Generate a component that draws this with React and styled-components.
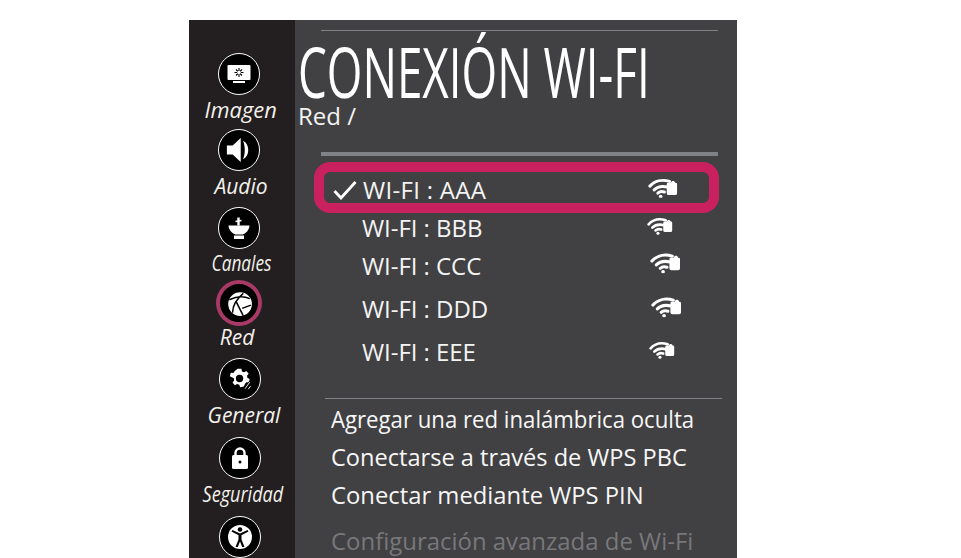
import React from "react";
import styled, { createGlobalStyle } from "styled-components";

const Global = createGlobalStyle`
    html, body { margin: 0; padding: 0; background: #fff; height: 558px; overflow: hidden; }
    body { font-family: "Open Sans", "Liberation Sans", sans-serif; }
`;

const Page = styled.div`
    padding: 20px 0 0 189px;
    height: 538px;
    overflow: hidden;
`;

const Panel = styled.div`
    display: flex;
    width: 548px;
    height: 538px;
    overflow: hidden;
    background: #414042;
    color: #fff;
`;

const Sidebar = styled.nav`
    width: 106px;
    flex: none;
    padding: 33px 6px 0 0;
    background: #231f20;
    box-sizing: border-box;
`;

const NavItem = styled.div`
    display: flex;
    flex-direction: column;
    align-items: center;
    height: ${(p) => p.$h}px;
`;

const NavIcon = styled.div`
    width: 42px;
    height: 42px;
    flex: none;
    box-sizing: border-box;
    border-radius: 50%;
    background: #000;
    border: ${(p) => (p.$active ? "2px solid #a93a68" : "1.5px solid #fff")};
    box-shadow: ${(p) => (p.$active ? "0 0 0 2px #a93a68" : "none")};
    display: flex;
    align-items: center;
    justify-content: center;
    transform: translateX(${(p) => p.$dx}px);
`;

const NavLabel = styled.div`
    font-style: italic;
    font-size: 21px;
    line-height: 28px;
    margin-top: ${(p) => p.$top}px;
    white-space: nowrap;
    color: #f4f1ec;
    transform: translateX(${(p) => p.$dx}px) scaleX(${(p) => p.$sx});
`;

const Main = styled.main`
    flex: 1;
    min-width: 0;
    padding: 10px 0 0 5px;
`;

const Rule = styled.div`
    height: ${(p) => p.$h}px;
    background: #808285;
    margin-left: ${(p) => p.$left}px;
    margin-top: ${(p) => p.$top || 0}px;
    width: ${(p) => p.$w}px;
`;

const Title = styled.h1`
    margin: 0 0 0 -2px;
    height: 66px;
    padding-top: 7px;
    font-size: 70px;
    line-height: 66px;
    font-weight: 400;
    white-space: nowrap;
    transform: scaleX(0.654);
    transform-origin: left center;
`;

const Crumb = styled.div`
    font-size: 24px;
    line-height: 30px;
    margin: -3px 0 0 -2px;
    color: #f4f4f4;
    height: 51px;
`;

const NetworkList = styled.div`
    margin: 6px 0 0 19px;
`;

const NetworkRow = styled.div`
    display: flex;
    align-items: center;
    box-sizing: border-box;
    height: ${(p) => p.$h}px;
    width: 405px;
    padding-left: 43px;
    position: relative;
    font-size: 24px;
    letter-spacing: -0.05px;
    white-space: nowrap;
    color: #f4f4f4;
`;

const SelectedRow = styled(NetworkRow)`
    height: 51px;
    margin-left: -5px;
    width: 405px;
    padding: 4px 0 0 39px;
    letter-spacing: 0.3px;
    border: 10px solid #c92160;
    border-radius: 16px;
`;

const Check = styled.svg`
    width: 24px;
    height: 20px;
    margin-left: -30px;
    margin-right: 6px;
    flex: none;
`;

const SignalIcon = styled.svg`
    position: absolute;
    top: calc(50% + ${(p) => p.$dy}px);
    left: ${(p) => p.$x}px;
    width: ${(p) => p.$w}px;
    transform: translateY(-50%);
`;

const Options = styled.div`
    margin: 0 0 0 31px;
    padding-top: 1px;
`;

const Option = styled.div`
    font-size: 24.5px;
    line-height: ${(p) => p.$h}px;
    height: ${(p) => p.$h}px;
    white-space: nowrap;
    transform: scaleX(${(p) => p.$sx});
    transform-origin: left center;
    color: ${(p) => (p.$disabled ? "#77787b" : "#f7f7f7")};
`;

const Glyph = ({ children, size = 26 }) => (
    <svg width={size} height={size} viewBox="0 0 26 26">
        {children}
    </svg>
);

const PictureIcon = () => (
    <Glyph>
        <rect x="1.500" y="4" width="23" height="15" rx="1" fill="#fff" />
        <rect x="7" y="20" width="12" height="2" fill="#fff" />
        <g stroke="#000" strokeWidth="1.1">
            <path d="M13 7v9M8.5 11.5h9M10 8.5l6 6M16 8.5l-6 6" />
        </g>
        <circle cx="13" cy="11.5" r="1.8" fill="#fff" />
    </Glyph>
);

const AudioIcon = () => (
    <Glyph size={30}>
        <path d="M2.500 9h5l7-6.500v21l-7-6.500h-5z" fill="#fff" />
        <path d="M16.500 5c3 1.500 4.500 4.500 4.500 8s-1.500 6.500-4.500 8c1-2.500 1.500-5 1.500-8s-.5-5.500-1.500-8z" fill="#fff" />
    </Glyph>
);

const ChannelIcon = () => (
    <Glyph>
        <path d="M12.500 2.500v8" stroke="#fff" strokeWidth="2.400" />
        <path d="M9.500 6.500l6-1" stroke="#fff" strokeWidth="1.600" />
        <path d="M2.500 10.500h21c0 4-3.500 8-7 9h-7c-3.500-1-7-5-7-9z" fill="#fff" />
        <rect x="8" y="20.500" width="10" height="3.500" fill="#fff" />
    </Glyph>
);

const NetworkIcon = () => (
    <Glyph size={28}>
        <circle cx="14" cy="14" r="11" fill="#fff" />
        <path d="M4 10c6-3 13-4 19-1M7 22c0-7 4-13 10-18M10 11l7 14M16 18l8-3" fill="none" stroke="#000" strokeWidth="1.400" />
    </Glyph>
);

const GearIcon = () => (
    <Glyph size={24}>
        <path
            fill="#fff"
            fillRule="evenodd"
            d="M10.500 2h4l.7 2.800 2.200 1 2.500-1.500 2.500 3-1.800 2.200.5 2.500 2.400 1-1 3.800-2.800-.2-1.500 2-1 2.600-4 .8-1-2.800-2.300-.8-2.500 1.500-2.500-3 1.800-2.200-.4-2.500L2 10l1-3.800 2.800.2 1.500-2zM12.500 8.500a4 4 0 1 0 0 8 4 4 0 0 0 0-8z"
        />
        <path d="M18 24l6-8M22 25l3-5" stroke="#000" strokeWidth="2.500" />
        <path d="M18.500 23.500l5-7M22 24l2.500-3.500" stroke="#fff" strokeWidth="1" />
    </Glyph>
);

const LockIcon = () => (
    <Glyph>
        <path d="M8.500 11V8a4.500 4.500 0 0 1 9 0v3" fill="none" stroke="#fff" strokeWidth="2.400" />
        <rect x="5" y="10" width="16" height="14" rx="1.500" fill="#fff" />
        <circle cx="13" cy="17" r="1.500" fill="#000" />
    </Glyph>
);

const AccessIcon = () => (
    <Glyph>
        <circle cx="13" cy="13" r="12" fill="#fff" />
        <circle cx="13" cy="5.500" r="2.300" fill="#000" />
        <path d="M4.500 7.500l7 3.800v4.200L8.500 23h2.300l2.200-5.500 2.200 5.500h2.300l-3-7.500v-4.200l7-3.800-.9-1.500L13 9.500 5.400 6z" fill="#000" />
    </Glyph>
);

const WifiIcon = ({ x, w, dy = -1 }) => (
    <SignalIcon $x={x} $w={w} $dy={dy} viewBox="0 0 32 22">
        <g fill="none" stroke="#fff" strokeWidth="3.200" strokeLinecap="round">
            <path d="M2 9C7 3.500 15 1.500 23 4" />
            <path d="M6.500 13C10 9.500 15 8.500 21 10" />
            <path d="M10.500 16.500c2-1.800 4.500-2 7-1.200" />
        </g>
        <circle cx="13.500" cy="20" r="1.900" fill="#fff" />
        <path d="M20 7a1.500 1.500 0 0 1 1.500-1.500h3c.5-2.500 4-2.500 4.500 0h.5a1.500 1.500 0 0 1 1.500 1.500v9.500a2 2 0 0 1-2 2h-7a2 2 0 0 1-2-2z" fill="#fff" />
    </SignalIcon>
);

const NAV = [
    { label: "Imagen", Icon: PictureIcon, h: 76, dx: 0, labelDx: 2, sx: 1.04, top: 1 },
    { label: "Audio", Icon: AudioIcon, h: 78, dx: 0, labelDx: 2, sx: 1, top: 1 },
    { label: "Canales", Icon: ChannelIcon, h: 75, dx: 0, labelDx: 3, sx: 0.82, top: 0 },
    { label: "Red", Icon: NetworkIcon, h: 76, dx: 0, labelDx: -2, sx: 1, top: -1, active: true },
    { label: "General", Icon: GearIcon, h: 79, dx: 1, labelDx: 5, sx: 1, top: 1 },
    { label: "Seguridad", Icon: LockIcon, h: 79, dx: 1, labelDx: 4, sx: 0.86, top: 1 },
    { label: "", Icon: AccessIcon, h: 60, dx: 1, labelDx: 0, sx: 1, top: 1 },
];

const NETWORKS = [
    { name: "WI-FI : BBB", h: 28, x: 328, w: 26 },
    { name: "WI-FI : CCC", h: 48, x: 331, w: 31, dy: -2 },
    { name: "WI-FI : DDD", h: 38, x: 332, w: 31 },
    { name: "WI-FI : EEE", h: 48, x: 330, w: 26 },
];

const OPTIONS = [
    { text: "Agregar una red inalámbrica oculta", h: 38, sx: 0.905 },
    { text: "Conectarse a través de WPS PBC", h: 38, sx: 0.963 },
    { text: "Conectar mediante WPS PIN", h: 38, sx: 0.972 },
    { text: "Configuración avanzada de Wi-Fi", h: 54, sx: 0.977, disabled: true },
];

export default function App() {
    return (
        <Page>
            <Global />
            <Panel>
                <Sidebar>
                    {NAV.map(({ label, Icon, h, dx, labelDx, sx, top, active }) => (
                        <NavItem key={label || "access"} $h={h}>
                            <NavIcon $active={active} $dx={dx}>
                                <Icon />
                            </NavIcon>
                            {label && (
                                <NavLabel $dx={labelDx} $sx={sx} $top={top}>
                                    {label}
                                </NavLabel>
                            )}
                        </NavItem>
                    ))}
                </Sidebar>
                <Main>
                    <Rule $h={1} $left={21} $w={397} />
                    <Title>CONEXIÓN WI-FI</Title>
                    <Crumb>Red /</Crumb>
                    <Rule $h={4} $left={21} $w={397} />
                    <NetworkList>
                        <SelectedRow>
                            <Check viewBox="0 0 24 20">
                                <path d="M1.500 11l6.500 7L22.500 2" fill="none" stroke="#fff" strokeWidth="2.800" />
                            </Check>
                            WI-FI : AAA
                            <WifiIcon x={324} w={30} dy={0} />
                        </SelectedRow>
                        {NETWORKS.map(({ name, h, x, w, dy }) => (
                            <NetworkRow key={name} $h={h}>
                                {name}
                                <WifiIcon x={x} w={w} dy={dy} />
                            </NetworkRow>
                        ))}
                    </NetworkList>
                    <Rule $h={1} $left={25} $w={397} $top={23} />
                    <Options>
                        {OPTIONS.map(({ text, h, sx, disabled }) => (
                            <Option key={text} $h={h} $sx={sx} $disabled={disabled}>
                                {text}
                            </Option>
                        ))}
                    </Options>
                </Main>
            </Panel>
        </Page>
    );
}
